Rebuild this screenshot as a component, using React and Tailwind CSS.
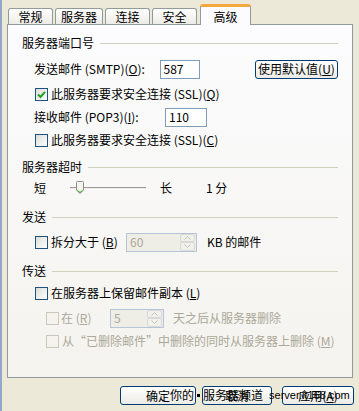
import React from "react";

const font = { fontFamily: '"Noto Sans CJK SC", "Liberation Sans", sans-serif' };

function Check({ checked, disabled }) {
  return (
    <span
      className={
        "inline-flex items-center justify-center w-[13px] h-[13px] shrink-0 border " +
        (disabled
          ? "border-[#CAC8BB] bg-[#F4F3EE]"
          : "border-[#1C5180] bg-gradient-to-br from-[#DCDCD7] to-white")
      }
    >
      {checked && (
        <svg width="9" height="9" viewBox="0 0 9 9">
          <path d="M1 4.5 L3.5 7 L8 1.8" stroke="#21A121" strokeWidth="2" fill="none" />
        </svg>
      )}
    </span>
  );
}

function Group({ title }) {
  return (
    <div className="flex items-center h-[14px]">
      <span className="mr-[6px]">{title}</span>
      <span className="flex-1 h-px bg-[#D0D0BF]" />
    </div>
  );
}

function Input({ value, w, disabled, spin }) {
  return (
    <div
      className={
        "flex items-center h-[19px] border pl-[3px] " +
        (disabled ? "border-[#B5C4D6] bg-[#EEEDE6] text-[#ACA899]" : "border-[#7F9DB9] bg-white")
      }
      style={{ width: w }}
    >
      <span className="flex-1 leading-none">{value}</span>
      {spin && (
        <div className="flex flex-col w-[15px] h-[17px] mr-px">
          <div className="flex-1 flex items-center justify-center bg-[#F1F0EA] border border-[#D6D8DA] rounded-[2px]">
            <svg width="7" height="4" viewBox="0 0 7 4">
              <path d="M0.5 3.5 L3.5 0.5 L6.5 3.5" stroke="#C3C2BA" fill="none" />
            </svg>
          </div>
          <div className="flex-1 flex items-center justify-center bg-[#F1F0EA] border border-[#D6D8DA] rounded-[2px]">
            <svg width="7" height="4" viewBox="0 0 7 4">
              <path d="M0.5 0.5 L3.5 3.5 L6.5 0.5" stroke="#C3C2BA" fill="none" />
            </svg>
          </div>
        </div>
      )}
    </div>
  );
}

function Btn({ children, w }) {
  return (
    <button
      className="h-[19px] flex items-center justify-center border border-[#003C74] rounded-[3px] bg-gradient-to-b from-white to-[#ECEBE6] text-[12px] leading-none"
      style={{ width: w }}
    >
      {children}
    </button>
  );
}

function Tab({ label, w }) {
  return (
    <div
      className="h-[16px] flex items-center justify-center border border-b-0 border-[#919B9C] rounded-t-[3px] bg-gradient-to-b from-white to-[#ECEBE6] mr-[2px]"
      style={{ width: w }}
    >
      {label}
    </div>
  );
}

export default function App() {
  return (
    <div
      className="relative w-[359px] h-[411px] overflow-hidden bg-[#ECE9D8] border-l-2 border-[#94A6C9] text-[12px] text-black leading-none"
      style={font}
    >
      <div className="flex items-end h-[24px] pl-[6px]">
        <Tab label="常规" w={45} />
        <Tab label="服务器" w={48} />
        <Tab label="连接" w={45} />
        <Tab label="安全" w={45} />
        <div className="relative z-10 -mb-px ml-px h-[21px] w-[51px] flex items-start justify-center pt-[4px] border border-b-0 border-[#919B9C] border-t-[3px] border-t-[#F2A93B] rounded-t-[3px] bg-[#FCFCFE]">
          高级
        </div>
      </div>

      <div className="ml-[5px] w-[346px] h-[354px] border border-[#919B9C] bg-gradient-to-b from-[#FCFCFE] to-[#F4F3EE] pl-[14px] pr-[14px] flex flex-col">
        <div className="mt-[11px]">
          <Group title="服务器端口号" />
        </div>
        <div className="mt-[9px] ml-[12px] flex items-center h-[20px]">
          <span className="w-[131px]">
            发送邮件 (SMTP)(<u>O</u>):
          </span>
          <Input value="587" w={42} />
          <div className="ml-[55px]">
            <Btn w={83}>
              使用默认值(<u>U</u>)
            </Btn>
          </div>
        </div>
        <div className="mt-[8px] ml-[13px] flex items-center h-[14px] gap-[3px]">
          <Check checked />
          <span>
            此服务器要求安全连接 (SSL)(<u>Q</u>)
          </span>
        </div>
        <div className="mt-[6px] ml-[12px] flex items-center h-[20px]">
          <span className="w-[131px]">
            接收邮件 (POP3)(<u>I</u>):
          </span>
          <Input value="110" w={42} />
        </div>
        <div className="mt-[6px] ml-[13px] flex items-center h-[14px] gap-[3px]">
          <Check />
          <span>
            此服务器要求安全连接 (SSL)(<u>C</u>)
          </span>
        </div>

        <div className="mt-[13px]">
          <Group title="服务器超时" />
        </div>
        <div className="mt-[7px] ml-[12px] flex items-center h-[14px]">
          <span className="w-[36px]">短</span>
          <div className="relative w-[76px] h-[12px] flex items-center">
            <div className="w-full h-[3px] border-t border-[#9D9C99] border-b border-b-white bg-[#ECEBE6]" />
            <svg className="absolute left-[6px] top-[-1px]" width="8" height="13" viewBox="0 0 8 13">
              <path d="M0.5 1.5 Q0.5 0.5 1.5 0.5 L6.5 0.5 Q7.5 0.5 7.5 1.5 L7.5 9 L4 12.5 L0.5 9 Z" fill="#F5F4EA" stroke="#8C8C8C" />
              <path d="M1.5 9.5 L4 11.5 L6.5 9.5" stroke="#21A121" fill="none" />
            </svg>
          </div>
          <span className="ml-[14px] w-[46px]">长</span>
          <span>1 分</span>
        </div>

        <div className="mt-[15px]">
          <Group title="发送" />
        </div>
        <div className="mt-[8px] ml-[13px] flex items-center h-[20px]">
          <Check />
          <span className="ml-[3px] w-[75px]">
            拆分大于 (<u>B</u>)
          </span>
          <Input value="60" w={71} disabled spin />
          <span className="ml-[10px]">KB 的邮件</span>
        </div>

        <div className="mt-[12px]">
          <Group title="传送" />
        </div>
        <div className="mt-[8px] ml-[13px] flex items-center h-[14px] gap-[3px]">
          <Check />
          <span>
            在服务器上保留邮件副本 (<u>L</u>)
          </span>
        </div>
        <div className="mt-[8px] ml-[24px] flex items-center h-[20px] text-[#ACA899]">
          <Check disabled />
          <span className="ml-[2px] w-[49px]">
            在 (<u>R</u>)
          </span>
          <Input value="5" w={54} disabled spin />
          <span className="ml-[9px]">天之后从服务器删除</span>
        </div>
        <div className="mt-[6px] ml-[24px] flex items-center h-[14px] gap-[3px] text-[#ACA899]">
          <Check disabled />
          <span>
            从“已删除邮件”中删除的同时从服务器上删除 (<u>M</u>)
          </span>
        </div>
      </div>

      <div className="mt-[8px] flex items-center">
        <div className="ml-[118px]">
          <Btn w={76}>确定</Btn>
        </div>
        <div className="ml-[6px]">
          <Btn w={70}>取消</Btn>
        </div>
        <div className="ml-[10px]">
          <Btn w={72}>
            应用(<u>A</u>)
          </Btn>
        </div>
      </div>

      {/* watermark stamped over the buttons */}
      <div className="absolute left-[168px] top-[389px] flex items-center text-[12px] text-black pointer-events-none whitespace-nowrap">
        <span>你的</span>
        <span className="mx-[3px] w-[3px] h-[3px] bg-black" />
        <span>服务器频道</span>
        <span className="ml-[6px] text-[11px]" style={{ fontFamily: '"Liberation Sans", sans-serif' }}>
          server.it168.com
        </span>
      </div>
    </div>
  );
}
